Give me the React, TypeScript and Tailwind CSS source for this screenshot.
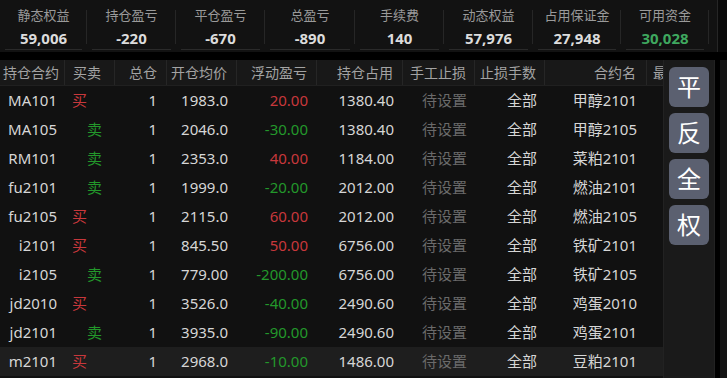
import React from "react";

const stats = [
  { label: "静态权益", value: "59,006", w: "w-[87px]" },
  { label: "持仓盈亏", value: "-220", w: "w-[89px]" },
  { label: "平仓盈亏", value: "-670", w: "w-[89px]" },
  { label: "总盈亏", value: "-890", w: "w-[90px]" },
  { label: "手续费", value: "140", w: "w-[89px]" },
  { label: "动态权益", value: "57,976", w: "w-[89px]" },
  { label: "占用保证金", value: "27,948", w: "w-[88px]" },
  { label: "可用资金", value: "30,028", w: "w-[88px]", green: true },
];

type Row = {
  code: string;
  buy: boolean;
  price: string;
  pnl: string;
  margin: string;
  name: string;
};

const rows: Row[] = [
  { code: "MA101", buy: true, price: "1983.0", pnl: "20.00", margin: "1380.40", name: "甲醇2101" },
  { code: "MA105", buy: false, price: "2046.0", pnl: "-30.00", margin: "1380.40", name: "甲醇2105" },
  { code: "RM101", buy: false, price: "2353.0", pnl: "40.00", margin: "1184.00", name: "菜粕2101" },
  { code: "fu2101", buy: false, price: "1999.0", pnl: "-20.00", margin: "2012.00", name: "燃油2101" },
  { code: "fu2105", buy: true, price: "2115.0", pnl: "60.00", margin: "2012.00", name: "燃油2105" },
  { code: "i2101", buy: true, price: "845.50", pnl: "50.00", margin: "6756.00", name: "铁矿2101" },
  { code: "i2105", buy: false, price: "779.00", pnl: "-200.00", margin: "6756.00", name: "铁矿2105" },
  { code: "jd2010", buy: true, price: "3526.0", pnl: "-40.00", margin: "2490.60", name: "鸡蛋2010" },
  { code: "jd2101", buy: false, price: "3935.0", pnl: "-90.00", margin: "2490.60", name: "鸡蛋2101" },
  { code: "m2101", buy: true, price: "2968.0", pnl: "-10.00", margin: "1486.00", name: "豆粕2101" },
];

const cols = [
  { title: "持仓合约", w: "w-[65px]", head: "justify-start pl-[3px]" },
  { title: "买卖", w: "w-[50px]", head: "justify-start pl-[8px]" },
  { title: "总仓", w: "w-[52px]", head: "justify-end pr-[9px]" },
  { title: "开仓均价", w: "w-[70px]", head: "justify-end pr-[9px]" },
  { title: "浮动盈亏", w: "w-[80px]", head: "justify-end pr-[9px]" },
  { title: "持仓占用", w: "w-[86px]", head: "justify-end pr-[9px]" },
  { title: "手工止损", w: "w-[72px]", head: "justify-end pr-[8px]" },
  { title: "止损手数", w: "w-[70px]", head: "justify-end pr-[8px]" },
  { title: "合约名", w: "w-[102px]", head: "justify-end pr-[10px]" },
  { title: "最新价", w: "w-[60px]", head: "justify-start pl-[6px]" },
];

const font = "font-['Noto_Sans','Noto_Sans_CJK_SC',sans-serif]";

export default function App() {
  return (
    <div className={`w-[727px] h-[378px] bg-black overflow-hidden flex flex-col ${font}`}>
      {/* summary bar */}
      <div className="h-[52px] flex bg-[#121212] shrink-0">
        {stats.map((s) => (
          <div key={s.label} className={`${s.w} shrink-0 flex flex-col items-center relative`}>
            <div className="text-[13px] leading-none text-[#9a9a9a] mt-[9px]">{s.label}</div>
            <div
              className={`text-[15px] leading-none font-bold mt-[9px] ${
                s.green ? "text-[#3fa85f]" : "text-[#dcdcdc]"
              }`}
            >
              {s.value}
            </div>
            <div className="absolute left-[5px] right-[5px] bottom-[2px] h-px bg-[#2a2a2a]" />
            <div className="absolute right-0 top-[10px] bottom-[8px] w-px bg-[#262626]" />
          </div>
        ))}
        <div className="w-[9px] shrink-0 border-r border-[#262626]" />
        <div className="flex-1 bg-[#0a0a0a]" />
      </div>
      <div className="h-[8px] shrink-0 bg-black" />

      <div className="flex flex-1 min-h-0">
        {/* positions table */}
        <div className="w-[663px] shrink-0 overflow-hidden bg-[#111111] flex flex-col">
          <div className="h-[26px] shrink-0 flex bg-[#181818] border-b border-[#202020] whitespace-nowrap">
            {cols.map((c, i) => (
              <div
                key={c.title}
                className={`${c.w} shrink-0 flex items-center text-[14px] text-[#a3a3a3] ${c.head} ${
                  i < cols.length - 1 ? "border-r border-[#262626]" : ""
                }`}
              >
                {c.title}
              </div>
            ))}
          </div>
          {rows.map((r, i) => (
            <div
              key={r.code}
              className={`h-[29px] shrink-0 flex items-center text-[15px] text-[#d6d6d6] whitespace-nowrap ${
                i === rows.length - 1 ? "bg-[#1e1e1e]" : ""
              }`}
            >
              <div className="w-[65px] shrink-0 text-right pr-[8px]">{r.code}</div>
              <div className="w-[50px] shrink-0">
                {r.buy ? (
                  <span className="pl-[7px] text-[#c8383c]">买</span>
                ) : (
                  <span className="pl-[22px] text-[#23982b]">卖</span>
                )}
              </div>
              <div className="w-[52px] shrink-0 text-right pr-[10px]">1</div>
              <div className="w-[70px] shrink-0 text-right pr-[9px]">{r.price}</div>
              <div
                className={`w-[80px] shrink-0 text-right pr-[9px] ${
                  r.pnl.startsWith("-") ? "text-[#23982b]" : "text-[#c8383c]"
                }`}
              >
                {r.pnl}
              </div>
              <div className="w-[86px] shrink-0 text-right pr-[9px]">{r.margin}</div>
              <div className="w-[72px] shrink-0 text-right pr-[8px] text-[#6a6a6a]">待设置</div>
              <div className="w-[70px] shrink-0 text-right pr-[8px]">全部</div>
              <div className="w-[102px] shrink-0 text-right pr-[10px]">{r.name}</div>
            </div>
          ))}
        </div>

        {/* quick action buttons */}
        <div className="w-[52px] shrink-0 bg-[#1a1a1a] border-l border-[#222] border-r flex flex-col items-center gap-[6px] pt-[7px]">
          {["平", "反", "全", "权"].map((t) => (
            <div
              key={t}
              className="w-[40px] h-[40px] rounded-[6px] bg-[#5b6070] flex items-center justify-center text-white text-[24px] leading-none"
            >
              {t}
            </div>
          ))}
        </div>
        <div className="w-[5px] shrink-0 bg-black" />
        <div className="flex-1 bg-[#141414]" />
      </div>
    </div>
  );
}
